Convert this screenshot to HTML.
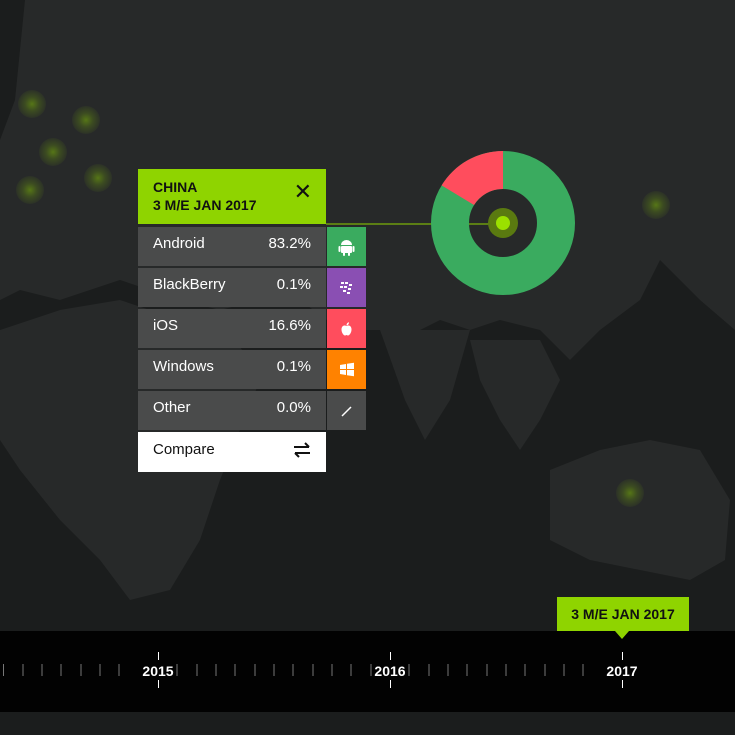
<!DOCTYPE html>
<html><head><meta charset="utf-8"><style>
*{margin:0;padding:0;box-sizing:border-box}
body{width:735px;height:735px;overflow:hidden;background:#1b1d1d;font-family:"Liberation Sans",sans-serif;position:relative}
.abs{position:absolute}
.hdr{left:138px;top:169px;width:188px;height:55px;background:#8fd400;color:#111;font-weight:bold;font-size:14px;line-height:18px;padding:9px 0 0 15px}
.row{left:138px;width:188px;height:39px;background:#4a4b4b;color:#fff;font-size:15px;line-height:34px;padding:0 15px}
.row span{float:right}
.ic{left:327px;width:39px;height:39px}
.cmp{left:138px;top:432px;width:188px;height:40px;background:#fff;color:#111;font-size:15px;line-height:36px;padding:0 15px}
</style></head><body>
<svg class="abs" style="left:0;top:0" width="735" height="735">
<g fill="#272929">
<path d="M25 0 L735 0 L735 330 L700 300 L660 260 L640 300 L600 330 L570 360 L540 330 L500 320 L470 330 L440 320 L420 330 L380 330 L340 330 L300 300 L260 300 L220 310 L180 300 L120 280 L60 300 L20 290 L0 300 L0 140 L15 100 Z"/>
<path d="M0 330 L60 310 L120 300 L180 320 L230 330 L260 380 L240 430 L220 480 L200 540 L170 590 L130 600 L100 560 L60 520 L20 470 L0 440 Z"/>
<path d="M380 330 L470 330 L450 400 L425 440 L405 400 Z"/>
<path d="M470 340 L540 340 L560 380 L540 420 L520 450 L500 420 L480 380 Z"/>
<path d="M550 470 L600 450 L650 440 L700 450 L730 500 L725 560 L690 580 L640 570 L590 560 L550 540 Z"/>
</g>
<defs><radialGradient id="g"><stop offset="0" stop-color="#8fd400" stop-opacity=".45"/><stop offset=".5" stop-color="#8fd400" stop-opacity=".2"/><stop offset="1" stop-color="#8fd400" stop-opacity=".05"/></radialGradient></defs>
<g fill="url(#g)">
<circle cx="32" cy="104" r="14"/><circle cx="86" cy="120" r="14"/><circle cx="53" cy="152" r="14"/><circle cx="30" cy="190" r="14"/><circle cx="98" cy="178" r="14"/><circle cx="656" cy="205" r="14"/><circle cx="630" cy="493" r="14"/>
</g>
<line x1="326" y1="224" x2="503" y2="224" stroke="#8fd400" stroke-width="1"/>
<circle cx="503" cy="223" r="53" fill="none" stroke="#3aab5f" stroke-width="38"/>
<path d="M503 151 A72 72 0 0 0 441.6 185.4 L474 205 A34 34 0 0 1 503 189 Z" fill="#ff4d5d"/>
<circle cx="503" cy="223" r="15" fill="#5a7a10"/>
<circle cx="503" cy="223" r="7" fill="#9be000"/>
<rect x="0" y="631" width="735" height="81" fill="#020202"/>
<g stroke="#777" stroke-width="1">
<path d="M3.5 664v12M23 664v12M42 664v12M61 664v12M81 664v12M100 664v12M119 664v12M177 664v12M197 664v12M216 664v12M235 664v12M255 664v12M274 664v12M293 664v12M313 664v12M332 664v12M351 664v12M371 664v12M409 664v12M429 664v12M448 664v12M467 664v12M487 664v12M506 664v12M525 664v12M545 664v12M564 664v12M583 664v12"/>
</g>
<g stroke="#fff" stroke-width="1">
<path d="M158.5 652v8M158.5 680v8M390.5 652v8M390.5 680v8M622.5 652v8M622.5 680v8"/>
</g>
<g fill="#fff" font-size="14" font-weight="bold" text-anchor="middle" font-family="Liberation Sans">
<text x="158" y="676">2015</text><text x="390" y="676">2016</text><text x="622" y="676">2017</text>
</g>
<rect x="557" y="597" width="132" height="34" fill="#8fd400"/>
<path d="M615 631 L622 639 L629 631 Z" fill="#8fd400"/>
<text x="623" y="619" text-anchor="middle" font-size="14" font-weight="bold" fill="#111" font-family="Liberation Sans">3 M/E JAN 2017</text>
</svg>
<div class="abs hdr">CHINA<br>3 M/E JAN 2017<span style="position:absolute;right:14px;top:14px;font-size:22px;font-weight:normal">✕</span></div>
<div class="abs row" style="top:227px">Android<span>83.2%</span></div>
<div class="abs row" style="top:268px">BlackBerry<span>0.1%</span></div>
<div class="abs row" style="top:309px">iOS<span>16.6%</span></div>
<div class="abs row" style="top:350px">Windows<span>0.1%</span></div>
<div class="abs row" style="top:391px">Other<span>0.0%</span></div>
<div class="abs ic" style="top:227px;background:#3aab5f"><svg width="39" height="39"><g fill="#fff"><path d="M14 18a5.5 5 0 0 1 11 0z"/><rect x="14" y="19" width="11" height="7" rx="1"/><rect x="11.5" y="19" width="2" height="6" rx="1"/><rect x="25.5" y="19" width="2" height="6" rx="1"/><rect x="16" y="25" width="2" height="4" rx="1"/><rect x="21" y="25" width="2" height="4" rx="1"/></g></svg></div>
<div class="abs ic" style="top:268px;background:#8a4fb3"><svg width="39" height="39"><g fill="#fff"><rect x="14" y="14" width="3" height="2"/><rect x="18" y="14" width="3" height="2"/><rect x="13" y="18" width="3" height="2"/><rect x="17" y="18" width="3" height="2"/><rect x="22" y="16" width="3" height="2"/><rect x="21" y="20" width="3" height="2"/><rect x="16" y="22" width="3" height="2"/><rect x="20" y="24" width="3" height="2"/></g></svg></div>
<div class="abs ic" style="top:309px;background:#ff4d5d"><svg width="39" height="39"><g fill="#fff"><path d="M19.5 17c-2-1.2-5 -0.5-5 3.5 0 3 2 6 3.5 6 1 0 1-0.5 1.5-0.5s0.5 0.5 1.5 0.5c1.5 0 3.5-3 3.5-6 0-4-3-4.7-5-3.5z"/><path d="M19.5 16.5c0-2 1-3 2.5-3.3 0 1.8-1 3-2.5 3.3z"/></g></svg></div>
<div class="abs ic" style="top:350px;background:#ff8200"><svg width="39" height="39"><g fill="#fff"><path d="M13 15l6-1v5h-6z"/><path d="M20 13.8l7-1v6.2h-7z"/><path d="M13 20h6v5l-6-1z"/><path d="M20 20h7v6.2l-7-1z"/></g></svg></div>
<div class="abs ic" style="top:391px;background:#4a4b4b"><svg width="39" height="39"><path d="M15 25L24 16" stroke="#fff" stroke-width="1.5"/></svg></div>
<div class="abs cmp">Compare<span style="position:absolute;right:14px;top:0"><svg width="20" height="36"><g stroke="#111" stroke-width="2" fill="none"><path d="M2 15h15M13 11l4 4"/><path d="M18 21h-15M7 25l-4-4"/></g></svg></span></div>
</body></html>
